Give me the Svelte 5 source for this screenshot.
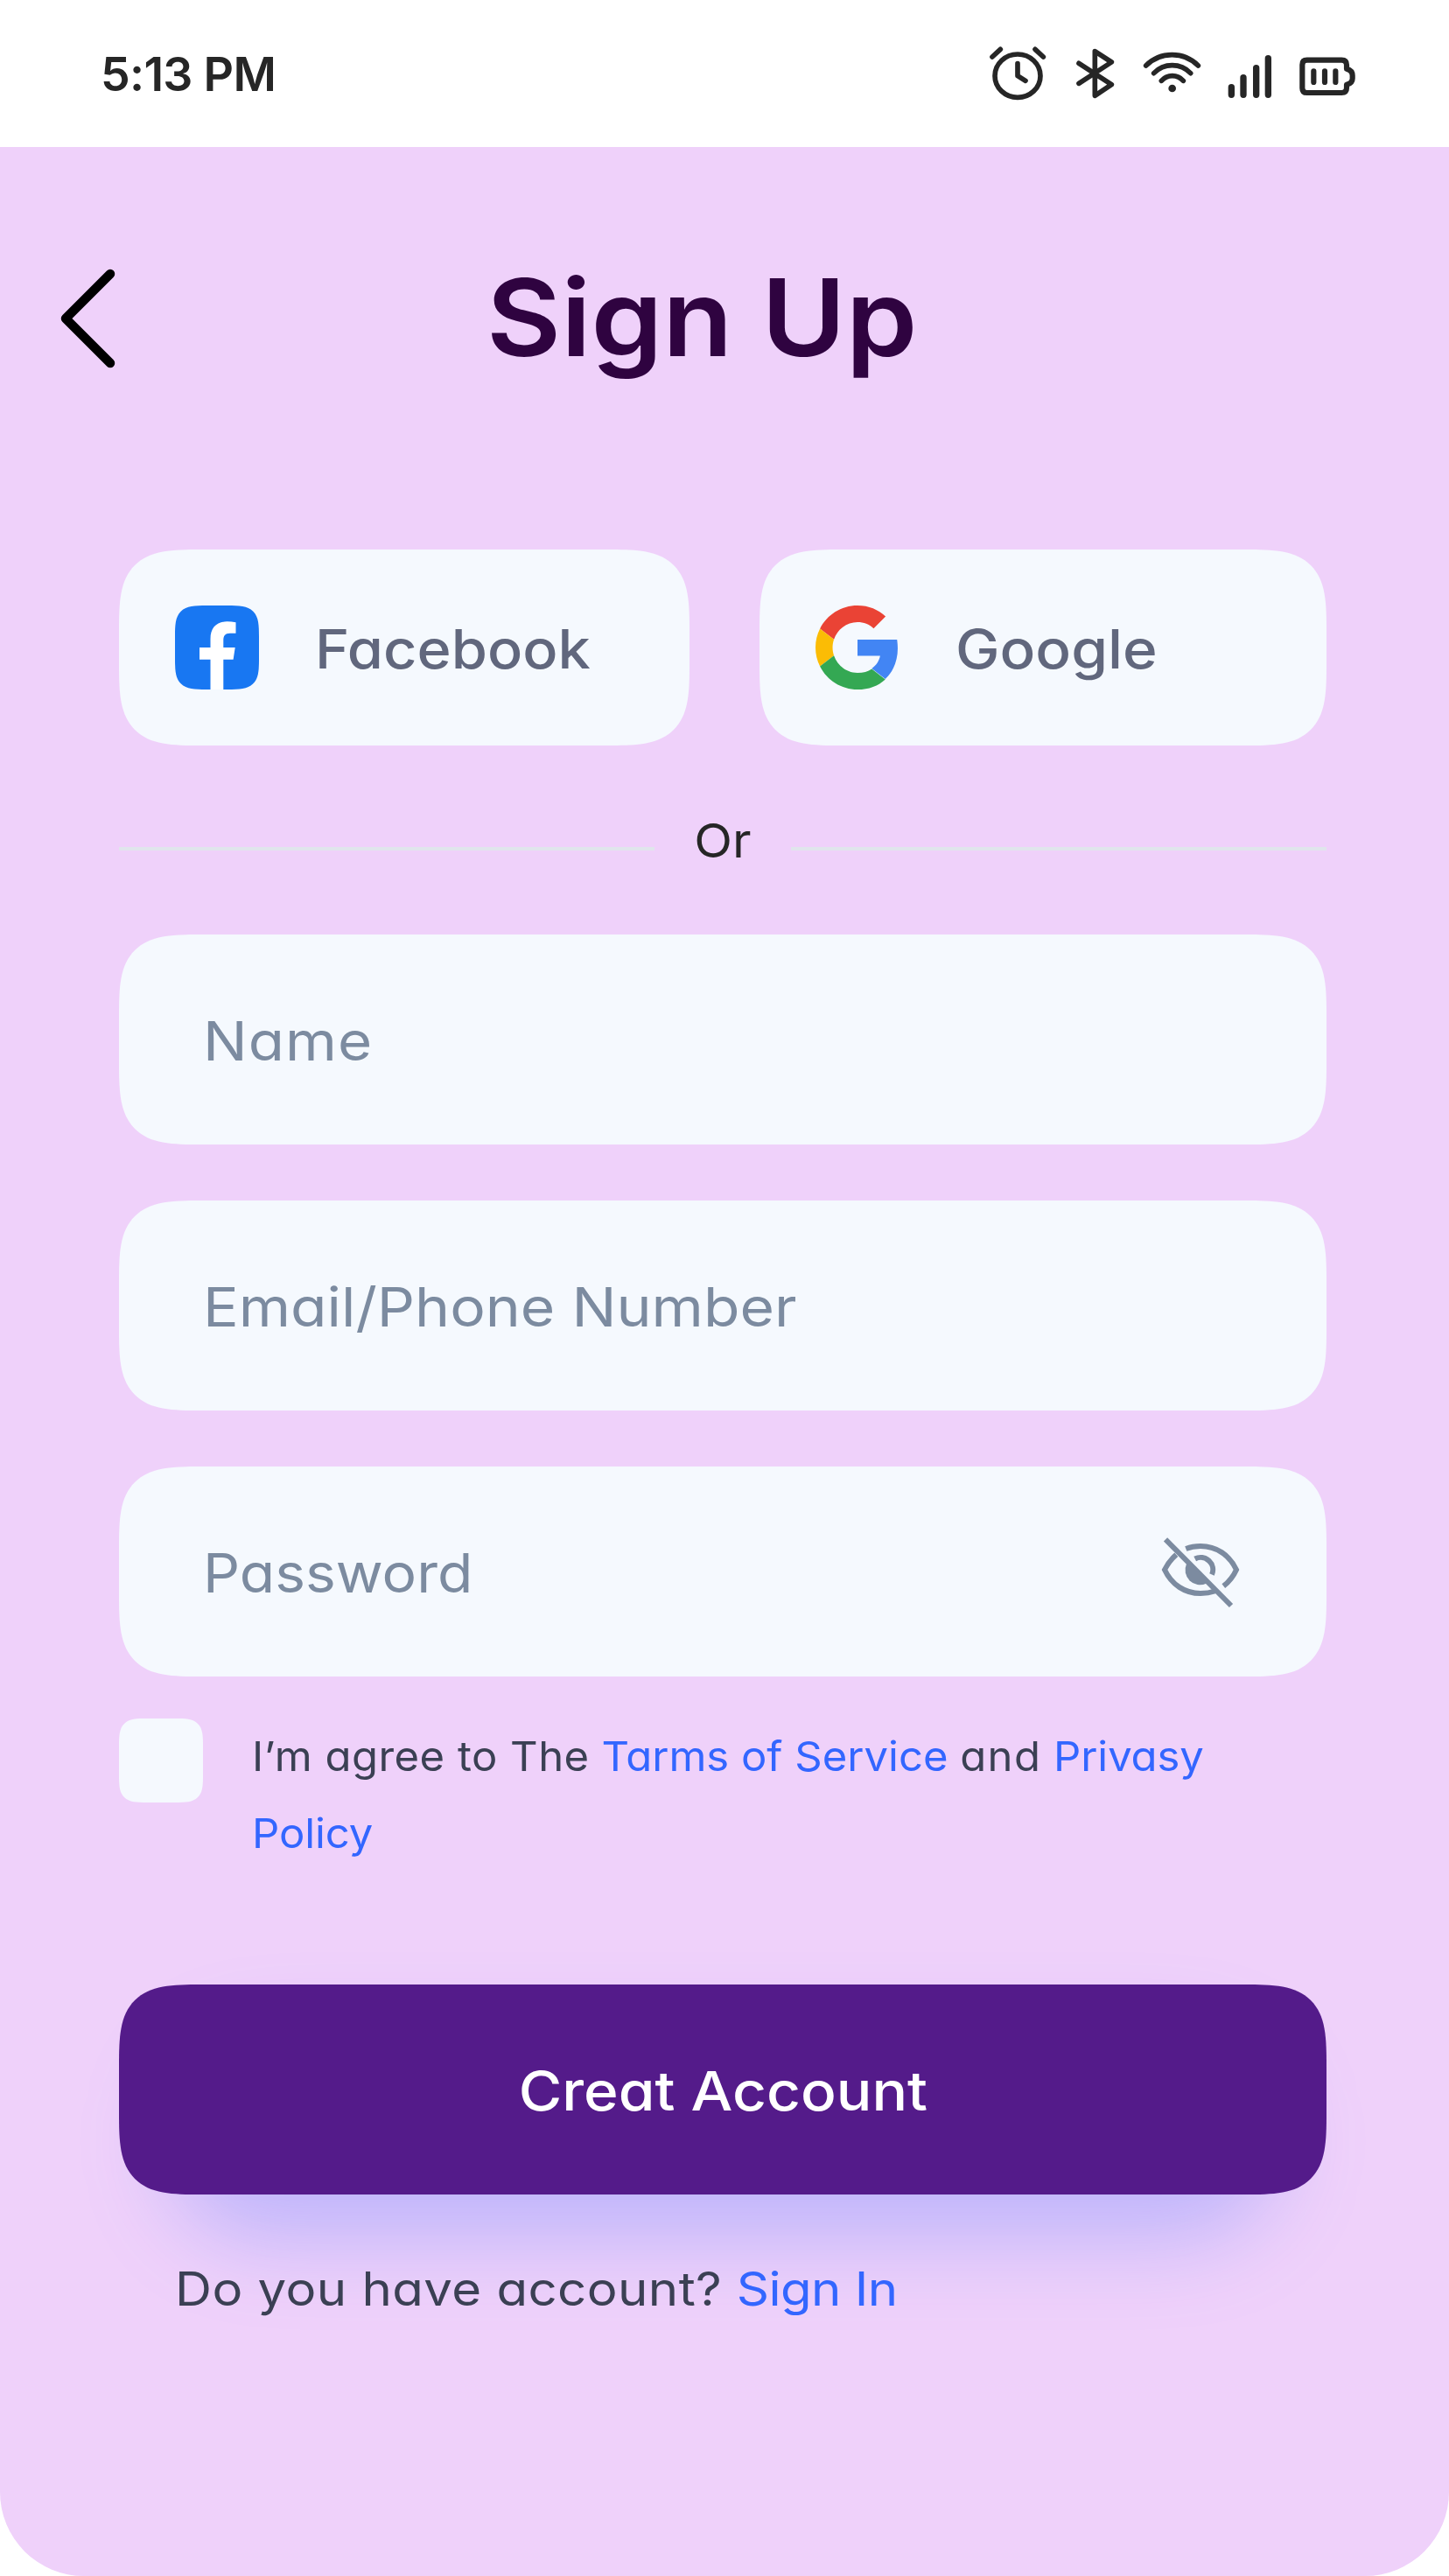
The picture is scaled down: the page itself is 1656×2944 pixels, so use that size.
<script>
  let name = $state('');
  let contact = $state('');
  let password = $state('');
  let agreed = $state(false);
</script>

<div class="screen">
  <header class="status">
    <span class="time">5:13 PM</span>
    <svg class="alarm" width="66" height="72" viewBox="0 0 198 216">
      <ellipse cx="99" cy="116" rx="78" ry="74" />
      <path d="M99 74V116L126 133" />
      <path d="M12 51L40 25M159 25L187 51" />
    </svg>
    <svg class="bluetooth" width="45" height="72" viewBox="0 0 135 216">
      <path d="M12 73L124 146L67 184V32L124 69L12 142" />
    </svg>
    <svg class="wifi" width="67" height="72" viewBox="0 0 201 216">
      <path d="M11 81A127 127 0 0 1 190 81" />
      <path d="M38 107A87 87 0 0 1 164 107" />
      <path d="M64 133A50 50 0 0 1 139 133" />
      <circle class="solid" cx="101" cy="159" r="13" />
    </svg>
    <svg class="signal" width="53" height="72" viewBox="0 0 159 216">
      <path d="M16 155V181M57 122V181M101 89V181M142 56V181" />
    </svg>
    <svg class="battery" width="66" height="72" viewBox="0 0 198 216">
      <path d="M29 62H148Q165 62 165 79V92Q185 97 185 115V125Q185 141 165 146V157Q165 174 148 174H29Q13 174 13 158V78Q13 62 29 62Z" />
      <path d="M52 100V138M90 100V138M127 100V138" />
    </svg>
  </header>

  <main class="panel">
    <div class="heading">
      <button class="back" aria-label="Back">
        <svg width="72" height="120" viewBox="0 0 72 120">
          <path d="M62 9L11 60L62 111" />
        </svg>
      </button>
      <h1>Sign Up</h1>
    </div>

    <div class="social">
      <button class="card facebook">
        <svg class="fb" width="96" height="96" viewBox="0 0 96 96">
          <path fill="#fff" d="M40.5 96V61.7H28V48H40.5V38C40.5 25 48 18.3 59.5 18.3Q64.5 18.3 69.5 19.3V31.7H63C57 31.7 55.3 35 55.3 39.5V48H68.7L66.6 61.7H55.3V96Z" />
        </svg>
        <span>Facebook</span>
      </button>
      <button class="card google">
        <svg width="96" height="96" viewBox="0 0 48 48">
          <path fill="#ea4335" d="M24 9.5c3.54 0 6.71 1.22 9.21 3.6l6.85-6.85C35.9 2.38 30.47 0 24 0 14.62 0 6.51 5.38 2.56 13.22l7.98 6.19C12.43 13.72 17.74 9.5 24 9.5z" />
          <path fill="#4285f4" d="M46.98 24.55c0-1.57-.15-3.55-.38-5.05H24v9.3h12.94c-.58 2.96-2.26 5.48-4.78 7.18l7.73 6c4.51-4.18 7.09-10.36 7.09-17.43z" />
          <path fill="#fbbc05" d="M10.53 28.59c-.48-1.45-.76-2.99-.76-4.59s.27-3.14.76-4.59l-7.98-6.19C.92 16.46 0 20.12 0 24c0 3.88.92 7.54 2.56 10.78l7.97-6.19z" />
          <path fill="#34a853" d="M24 48c6.48 0 11.93-2.13 15.89-5.81l-7.73-6c-2.15 1.45-4.92 2.3-8.16 2.3-6.26 0-11.57-4.22-13.47-9.91l-7.98 6.19C6.51 42.62 14.62 48 24 48z" />
        </svg>
        <span>Google</span>
      </button>
    </div>

    <div class="divider">
      <i></i>
      <span>Or</span>
      <i></i>
    </div>

    <form class="fields">
      <label class="field"><input class="name" placeholder="Name" bind:value={name} /></label>
      <label class="field"><input class="contact" placeholder="Email/Phone Number" bind:value={contact} /></label>
      <label class="field">
        <input class="password" type="password" placeholder="Password" bind:value={password} />
        <svg class="eye" width="96" height="96" viewBox="0 0 96 96">
          <path d="M31.3 22Q39 19 48 19C66 19 81 29 89 46Q84 57 74.3 64.7" />
          <path d="M20.3 28.7Q12 36 7 46C15 63 30 73 48 73Q57 73 64.3 70.5" />
          <path d="M41.7 33.5A14 14 0 0 1 61 51.5" />
          <path d="M8 11.3L83 87" />
          <path class="solid" d="M31.9 39.6A17 17 0 0 0 54.5 61.8L54.5 58L36 39Z" />
        </svg>
      </label>
    </form>

    <div class="terms">
      <button class="check" role="checkbox" aria-checked={agreed} aria-label="Agree" onclick={() => (agreed = !agreed)}></button>
      <p><span class="lead">I’m agree to The</span> <a href="#terms">Tarms of Service</a> <span class="and">and</span> <a class="privacy" href="#privacy">Privasy<br />Policy</a></p>
    </div>

    <button class="submit"><span class="face"><span class="label">Creat Account</span></span></button>

    <p class="signin"><span class="ask">Do you have account?</span> <a href="#signin">Sign In</a></p>
  </main>
</div>

<style>
  :global(body) {
    background: #fff;
  }

  .screen {
    width: 1656px;
    height: 2944px;
    display: flex;
    flex-direction: column;
    font-family: Inter, 'Liberation Sans', sans-serif;
    font-feature-settings: 'cv11';
  }

  button,
  input {
    font: inherit;
    font-feature-settings: inherit;
    border: 0;
    padding: 0;
    margin: 0;
    background: none;
    outline: 0;
  }

  p,
  h1 {
    margin: 0;
  }

  a {
    color: #3366ff;
    text-decoration: none;
  }

  svg {
    display: block;
    flex: none;
  }

  .status {
    height: 168px;
    box-sizing: border-box;
    padding: 0 106px 0 115px;
    display: flex;
    align-items: center;
    color: #262626;
  }

  .time {
    font-size: 53.6px;
    font-weight: 600;
    letter-spacing: -0.7px;
    margin-right: auto;
  }

  .status svg {
    fill: none;
    stroke: currentColor;
    stroke-width: 17;
    stroke-linecap: round;
    stroke-linejoin: round;
  }

  .status .solid {
    fill: currentColor;
    stroke: none;
  }

  .bluetooth {
    margin-left: 33px;
  }

  .wifi {
    margin-left: 32px;
  }

  .signal,
  .battery {
    margin-left: 29px;
  }

  .status .signal {
    stroke-width: 22;
  }

  .status .battery {
    stroke-width: 18.5;
  }

  .panel {
    flex: 1;
    box-sizing: border-box;
    background: #efd1fa;
    border-radius: 0 0 96px 96px;
    padding: 132px 140px 0 136px;
  }

  .heading {
    height: 128px;
    display: flex;
    align-items: center;
    margin: 0 0 200px -72px;
  }

  .back {
    width: 72px;
  }

  .back path {
    fill: none;
    stroke: #000;
    stroke-width: 10.5;
    stroke-linecap: round;
    stroke-linejoin: round;
  }

  h1,
  .card span,
  .field input,
  .terms p,
  .label,
  .signin {
    transform-origin: left center;
  }

  h1 {
    margin-left: 420px;
    padding-bottom: 2px;
    font-size: 122px;
    line-height: 128px;
    font-weight: 600;
    transform: scaleX(1.073);
    color: #2f0340;
  }

  .social {
    display: flex;
    gap: 80px;
  }

  .card {
    width: 652px;
    height: 224px;
    box-sizing: border-box;
    padding: 0 64px;
    display: flex;
    align-items: center;
    gap: 64px;
    background: #f5f9fe;
    border-radius: 94px;
    corner-shape: superellipse(1.7);
    color: #61677d;
    font-size: 62px;
    font-weight: 500;
  }

  .card span {
    padding-top: 2px;
  }

  .facebook span {
    transform: scaleX(1.075);
  }

  .google {
    width: 648px;
  }

  .google span {
    transform: scaleX(1.09);
  }

  .fb {
    background: #1877f2;
    border-radius: 36px;
    corner-shape: superellipse(1.75);
    overflow: hidden;
  }

  .divider {
    height: 100px;
    margin: 68px 0 48px;
    display: flex;
    align-items: center;
  }

  .divider i {
    flex: 1;
    height: 4px;
    background: #e0e5ec;
  }

  .divider span {
    width: 156px;
    padding-bottom: 20px;
    text-align: center;
    font-size: 54px;
    transform: scaleX(1.06);
    color: #262626;
  }

  .fields {
    display: flex;
    flex-direction: column;
    gap: 64px;
  }

  .field {
    height: 240px;
    box-sizing: border-box;
    padding: 0 96px;
    display: flex;
    align-items: center;
    justify-content: space-between;
    background: #f5f9fe;
    border-radius: 94px;
    corner-shape: superellipse(1.7);
  }

  .field input {
    width: 960px;
    height: 100px;
    padding-top: 3px;
    font-size: 62px;
    color: #3b4054;
  }

  .field input::placeholder {
    color: #7c8ba0;
    opacity: 1;
  }

  .name {
    letter-spacing: 1px;
    transform: scaleX(1.085);
  }

  .contact {
    transform: scaleX(1.093);
  }

  .password {
    transform: scaleX(1.064);
  }

  .eye {
    fill: none;
    stroke: #7c8ba0;
    stroke-width: 6;
  }

  .eye .solid {
    fill: #7c8ba0;
    stroke: none;
  }

  .terms {
    margin-top: 48px;
    display: flex;
    gap: 56px;
    align-items: flex-start;
    color: #3b4054;
  }

  .terms p {
    margin-top: -1px;
    font-size: 46.8px;
    line-height: 88px;
    white-space: nowrap;
    transform: scaleX(1.047);
  }

  .check {
    flex: none;
    width: 96px;
    height: 96px;
    background: #f5f9fe;
    border-radius: 32px;
    corner-shape: superellipse(1.75);
  }

  .lead {
    letter-spacing: 0.45px;
  }

  .and {
    letter-spacing: 1.3px;
  }

  .privacy {
    letter-spacing: -0.1px;
  }

  .submit {
    position: relative;
    display: block;
    width: 100%;
    height: 240px;
    margin-top: 129px;
  }

  /* Soft blue glow that sits under the button */
  .submit::before {
    content: '';
    position: absolute;
    inset: 66px 54px -52px;
    border-radius: 136px;
    background: rgba(51, 102, 255, 0.255);
    filter: blur(48px);
  }

  .face {
    position: relative;
    display: flex;
    height: 100%;
    box-sizing: border-box;
    padding-top: 3px;
    align-items: center;
    justify-content: center;
    background: #541b8a;
    border-radius: 94px;
    corner-shape: superellipse(1.7);
    color: #fff;
    font-size: 62px;
    font-weight: 500;
  }

  .label {
    transform: scaleX(1.09);
    transform-origin: center;
  }

  .signin {
    position: relative;
    margin: 66px 0 0 64px;
    font-size: 53.5px;
    line-height: 84px;
    transform: scaleX(1.087);
    color: #3b4054;
  }

  .ask {
    letter-spacing: 0.4px;
  }

  .signin a {
    letter-spacing: -0.5px;
  }
</style>
